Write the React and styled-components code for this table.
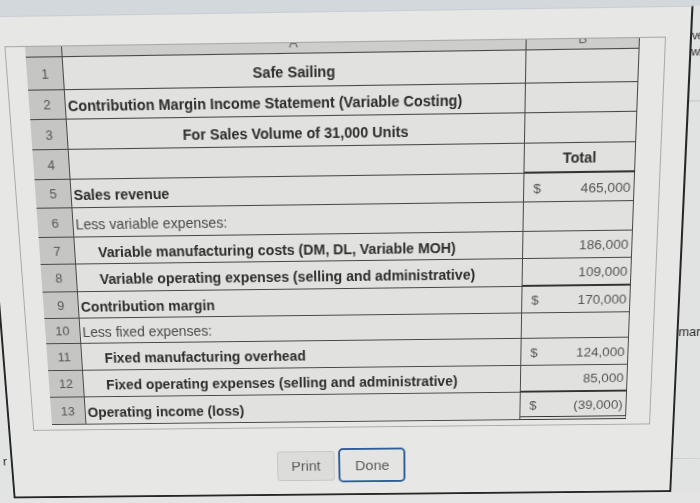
import React, { useMemo } from "react";
import styled, { createGlobalStyle, css } from "styled-components";

const Global = createGlobalStyle`
  html, body {
    margin: 0;
    padding: 0;
    overflow: hidden;
    background: #dedfdf;
  }
  body {
    font-family: "Liberation Sans", Arial, sans-serif;
  }
`;

/* The photo is taken at an angle: the flat layout below is projected
   onto the photographed quadrilateral of the spreadsheet. */
function quadTransform(src, quad) {
  const [[x0, y0], [x1, y1], [x2, y2], [x3, y3]] = quad;
  const dx1 = x1 - x2, dx2 = x3 - x2, dx3 = x0 - x1 + x2 - x3;
  const dy1 = y1 - y2, dy2 = y3 - y2, dy3 = y0 - y1 + y2 - y3;
  const den = dx1 * dy2 - dx2 * dy1;
  const g = (dx3 * dy2 - dx2 * dy3) / den;
  const h = (dx1 * dy3 - dx3 * dy1) / den;
  const a = x1 - x0 + g * x1, b = x3 - x0 + h * x3, c = x0;
  const d = y1 - y0 + g * y1, e = y3 - y0 + h * y3, f = y0;
  const { x: sx, y: sy, w, h: sh } = src;
  const a1 = a / w, a2 = b / sh, a4 = c - (a * sx) / w - (b * sy) / sh;
  const b1 = d / w, b2 = e / sh, b4 = f - (d * sx) / w - (e * sy) / sh;
  const d1 = g / w, d2 = h / sh, d4 = 1 - (g * sx) / w - (h * sy) / sh;
  return `matrix3d(${a1},${b1},0,${d1},${a2},${b2},0,${d2},0,0,1,0,${a4},${b4},0,${d4})`;
}

const Scene = styled.div`
  width: 860px;
  height: 640px;
  display: flex;
  flex-direction: column;
  transform-origin: 0 0;
  background: #dfe0e0;
`;

const TopStrip = styled.div`
  height: 61px;
  flex: none;
  background: #d3d8dd;
`;

const Middle = styled.div`
  display: flex;
  flex: none;
`;

const LeftStrip = styled.div`
  width: 54px;
  flex: none;
  display: flex;
  flex-direction: column;
  align-items: flex-end;
  padding-right: 4px;
  box-sizing: border-box;
  background: #e2e3e3;
  overflow: hidden;
`;

const RightStrip = styled.div`
  flex: 1;
  display: flex;
  flex-direction: column;
  padding: 20px 0 0 0;
  background: #e1e2e2;
  overflow: hidden;
`;

const PageText = styled.div`
  font-size: ${(p) => p.$size || 13}px;
  line-height: ${(p) => (p.$size ? p.$size + 4 : 17)}px;
  letter-spacing: ${(p) => (p.$size ? -0.5 : 0)}px;
  color: #2c2c2c;
  margin-top: ${(p) => p.$gap || 0}px;
  white-space: nowrap;
`;

const PageRule = styled.div`
  height: 1px;
  background: #c4c6c8;
  margin-top: ${(p) => p.$gap || 0}px;
`;

const BottomStrip = styled.div`
  flex: 1;
  background: #e4e4e4;
`;

const Dialog = styled.div`
  width: 691px;
  height: 485px;
  flex: none;
  box-sizing: border-box;
  background: #e7e7e5;
  border: 2px solid #262626;
  border-top: 1px solid #c9ced3;
  padding: 27px 23px 0 24px;
  display: flex;
  flex-direction: column;
`;

const Frame = styled.div`
  border: 1px solid #a9a9a7;
  padding: 0 24px 5px 19px;
`;

const Sheet = styled.div`
  display: grid;
  grid-template-columns: 36px 450px 109px;
  grid-template-rows: 10px 31px 28px 29px 29px 28px 29px 27px 28px 27px 26px 28px 28px 29px;
  background: #e1e1df;
  font-size: 14.2px;
  color: #2f2f2f;
`;

const line = "1.5px solid #474747";

const HeaderCell = styled.div`
  background: ${(p) => (p.$corner ? "#c6c6c4" : "#cdcdcb")};
  border-bottom: ${line};
  border-right: ${(p) => (p.$last ? "1px solid #474747" : line)};
  box-sizing: border-box;
  overflow: hidden;
  display: flex;
  align-items: flex-end;
  justify-content: center;
  color: #666;
  font-size: 13px;
  line-height: 13px;
`;

const HeaderLabel = styled.span`
  margin-bottom: 3px;
`;

const RowNum = styled.div`
  background: #c5c5c3;
  border-bottom: ${line};
  border-right: ${line};
  box-sizing: border-box;
  display: flex;
  align-items: center;
  justify-content: center;
  font-size: 13px;
  color: #565656;
`;

const LabelCell = styled.div`
  border-bottom: ${line};
  border-right: ${line};
  box-sizing: border-box;
  display: flex;
  align-items: center;
  justify-content: ${(p) => (p.$center ? "center" : "flex-start")};
  padding-left: ${(p) => (p.$center ? 0 : p.$indent ? 23 : 2)}px;
  padding-top: 3px;
  font-weight: ${(p) => (p.$bold ? 700 : 400)};
  color: ${(p) => (p.$bold ? "#2d2d2d" : "#4a4a4a")};
  white-space: nowrap;
`;

const rules = {
  thin: css`border-bottom: ${line};`,
  thick: css`border-bottom: 2.5px solid #333;`,
  double: css`border-bottom: 4px double #333;`,
};

const ValueCell = styled.div`
  ${(p) => rules[p.$rule || "thin"]};
  border-right: 1.5px solid #474747;
  box-sizing: border-box;
  display: flex;
  align-items: center;
  justify-content: ${(p) => (p.$center ? "center" : "space-between")};
  padding: 1px 3px 0 9px;
  font-size: 13.6px;
  color: #555;
`;

const TotalLabel = styled.span`
  font-weight: 700;
  font-size: 14.2px;
  color: #2f2f2f;
  margin-left: -6px;
`;

const ButtonRow = styled.div`
  margin-top: 22px;
  display: flex;
  justify-content: center;
  align-items: center;
  gap: 4px;
`;

const Button = styled.button`
  font-family: "Liberation Sans", Arial, sans-serif;
  font-size: 15px;
  color: #5a5a5a;
  box-sizing: border-box;
  cursor: pointer;
  ${(p) =>
    p.$primary
      ? css`
          height: 37px;
          padding: 0 15px;
          background: #e4e4e2;
          border: 2px solid #2f5d98;
          border-radius: 5px;
        `
      : css`
          height: 32px;
          padding: 0 14px;
          background: #dcdcda;
          border: 1px solid #c5c5c3;
          border-radius: 3px;
        `}
`;

const rows = [
  { label: "Safe Sailing", center: true, bold: true },
  { label: "Contribution Margin Income Statement (Variable Costing)", bold: true },
  { label: "For Sales Volume of 31,000 Units", center: true, bold: true },
  { label: "", total: "Total", rule: "thick" },
  { label: "Sales revenue", bold: true, dollar: true, value: "465,000" },
  { label: "Less variable expenses:" },
  { label: "Variable manufacturing costs (DM, DL, Variable MOH)", bold: true, indent: true, value: "186,000" },
  { label: "Variable operating expenses (selling and administrative)", bold: true, indent: true, value: "109,000", rule: "thick" },
  { label: "Contribution margin", bold: true, dollar: true, value: "170,000" },
  { label: "Less fixed expenses:" },
  { label: "Fixed manufacturing overhead", bold: true, indent: true, dollar: true, value: "124,000" },
  { label: "Fixed operating expenses (selling and administrative)", bold: true, indent: true, value: "85,000", rule: "thick" },
  { label: "Operating income (loss)", bold: true, dollar: true, value: "(39,000)", rule: "double" },
];

export default function App() {
  const transform = useMemo(
    () =>
      quadTransform({ x: 100, y: 90, w: 595, h: 377 }, [
        [25, 47],
        [640, 38],
        [626, 419],
        [52, 425],
      ]),
    []
  );

  return (
    <>
      <Global />
      <Scene style={{ transform }}>
        <TopStrip />
        <Middle>
          <LeftStrip>
            <PageText $gap={436}>r</PageText>
          </LeftStrip>
          <Dialog>
            <Frame>
              <Sheet>
                <HeaderCell $corner />
                <HeaderCell>
                  <HeaderLabel>A</HeaderLabel>
                </HeaderCell>
                <HeaderCell $last>
                  <HeaderLabel>B</HeaderLabel>
                </HeaderCell>
                {rows.map((r, i) => (
                  <React.Fragment key={i}>
                    <RowNum>{i + 1}</RowNum>
                    <LabelCell $center={r.center} $bold={r.bold} $indent={r.indent}>
                      {r.label}
                    </LabelCell>
                    <ValueCell $rule={r.rule} $center={!!r.total}>
                      {r.total ? (
                        <TotalLabel>{r.total}</TotalLabel>
                      ) : (
                        <>
                          <span>{r.dollar ? "$" : ""}</span>
                          <span>{r.value || ""}</span>
                        </>
                      )}
                    </ValueCell>
                  </React.Fragment>
                ))}
              </Sheet>
            </Frame>
            <ButtonRow>
              <Button>Print</Button>
              <Button $primary>Done</Button>
            </ButtonRow>
          </Dialog>
          <RightStrip>
            <PageText $size={11}>ve</PageText>
            <PageText $size={11}>wh</PageText>
            <PageRule $gap={38} />
            <PageText $gap={218}>mar</PageText>
            <PageRule $gap={124} />
          </RightStrip>
        </Middle>
        <BottomStrip />
      </Scene>
    </>
  );
}
